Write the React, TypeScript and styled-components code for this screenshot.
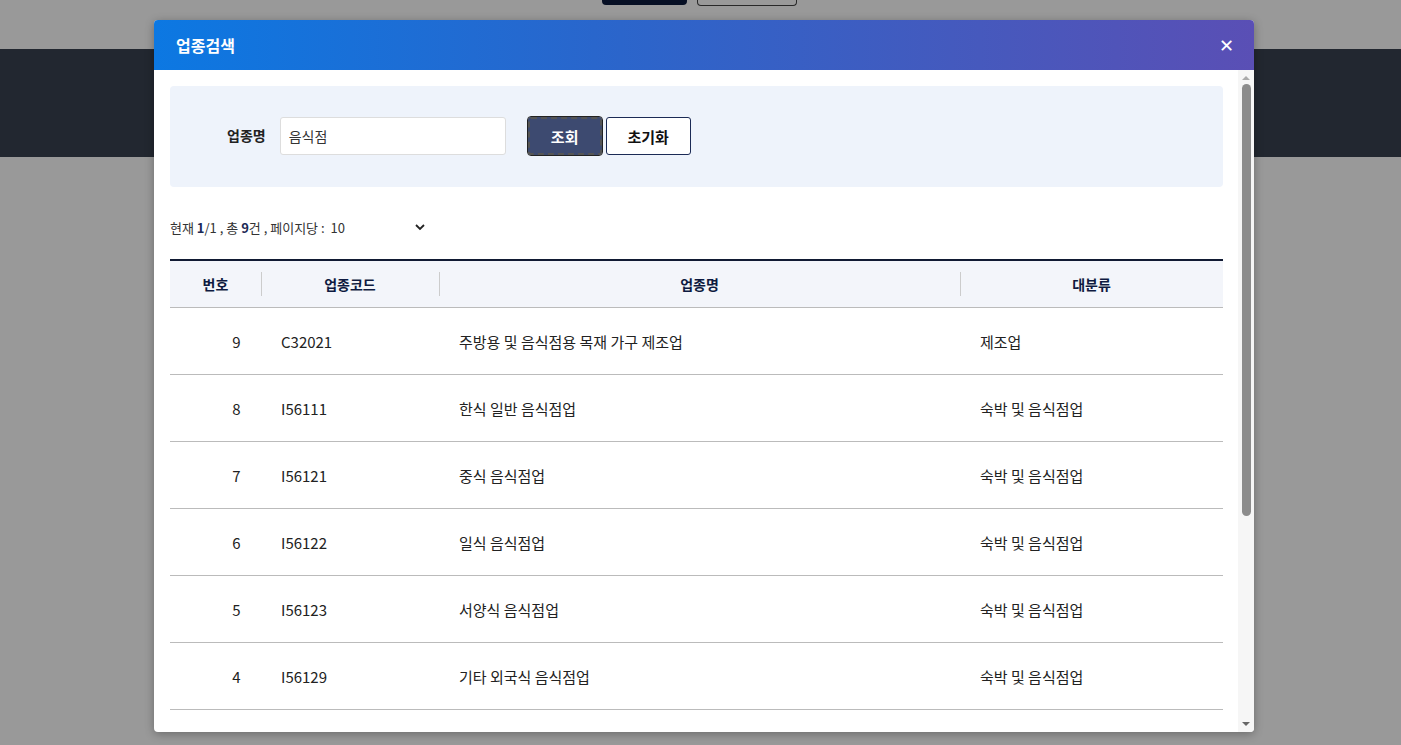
import React from "react";
import styled, { createGlobalStyle } from "styled-components";

const G = createGlobalStyle`
  html,body{margin:0;padding:0;height:100%;overflow:hidden;}
  body{font-family:"Noto Sans CJK KR","Noto Sans",sans-serif;background:#fff;}
`;
const Page = styled.div`position:relative;width:1401px;height:745px;background:#fff;overflow:hidden;`;
const TopBar = styled.div`height:49px;display:flex;justify-content:center;gap:10px;padding-right:3px;`;
const TopBtn = styled.div<{dark?:boolean}>`width:${p=>p.dark?85:98}px;height:5px;border-radius:0 0 4px 4px;
  background:${p=>p.dark?"#0b1a3c":"#fff"};border:${p=>p.dark?"none":"1px solid #444"};border-top:none;`;
const Band = styled.div`height:108px;background:#3a4150;`;
const Dim = styled.div`position:absolute;inset:0;background:rgba(0,0,0,0.4);`;
const Modal = styled.div`position:absolute;left:154px;top:20px;width:1100px;height:712px;background:#fff;border-radius:4px;
  overflow:hidden;display:flex;flex-direction:column;box-shadow:0 2px 10px rgba(0,0,0,.3);`;
const Header = styled.div`height:50px;flex:none;display:flex;align-items:center;justify-content:space-between;padding:0 20px 0 22px;
  background:linear-gradient(90deg,#0c78e2 0%,#2966cc 40%,#4659bd 75%,#5a4fb5 100%);color:#fff;font-weight:700;font-size:16px;`;
const Close = styled.span`font-size:18px;font-weight:700;font-family:"DejaVu Sans",sans-serif;`;
const BodyWrap = styled.div`flex:1;display:flex;min-height:0;`;
const Body = styled.div`flex:1;overflow:hidden;padding:16px 15px 0 16px;`;
const Track = styled.div`width:16px;flex:none;background:#f6f6f6;display:flex;flex-direction:column;align-items:center;`;
const Arrow = styled.div<{down?:boolean}>`width:0;height:0;border-left:4px solid transparent;border-right:4px solid transparent;margin:${p=>p.down?"auto 0 6px":"6px 0 4px"};
  ${p=>p.down?"border-top:4px solid #666;":"border-bottom:4px solid #aaa;"}`;
const Thumb = styled.div`width:9px;height:432px;background:#8c8c8c;border-radius:5px;`;
const SearchBox = styled.div`background:#eef3fb;border-radius:4px;height:101px;display:flex;align-items:flex-start;padding:31px 0 0 57px;box-sizing:border-box;`;
const Label = styled.label`font-size:14px;font-weight:700;color:#222;margin-top:8px;margin-right:14px;`;
const Input = styled.div`width:226px;height:38px;box-sizing:border-box;border:1px solid #ddd;border-radius:3px;background:#fff;
  font-size:14px;color:#333;display:flex;align-items:center;padding-left:8px;margin-right:22px;`;
const Btn = styled.button<{primary?:boolean}>`height:38px;box-sizing:border-box;font-family:inherit;font-size:15px;font-weight:700;border-radius:3px;
  ${p=>p.primary?"width:74px;background:#3d4a70;color:#fff;border:2px dashed #555;outline:1px solid #222;margin-right:4px;":"width:85px;background:#fff;color:#111;border:1px solid #1b2a55;"}`;
const Info = styled.div`margin-top:30px;height:20px;display:flex;align-items:center;font-size:13px;color:#333;`;
const B = styled.b`color:#1b2a55;`;
const Sel = styled.span`margin-left:6px;width:94px;display:flex;justify-content:space-between;align-items:center;`;
const Table = styled.table`margin-top:22px;width:100%;border-collapse:collapse;border-top:2px solid #111a33;font-size:15px;color:#222;`;
const Th = styled.th<{w?:number}>`height:46px;background:#f3f5fa;font-weight:700;font-size:14px;color:#0e1a40;border-bottom:1px solid #bbb;position:relative;padding:0;
  ${p=>p.w?`width:${p.w}px;`:""}
  &:not(:first-child)::before{content:"";position:absolute;left:0;top:11px;height:24px;border-left:1px solid #ccc;}`;
const Td = styled.td<{num?:boolean}>`height:66px;border-bottom:1px solid #bbb;padding:0 0 0 ${p=>p.num?42:20}px;text-align:${p=>p.num?"center":"left"};`;
const rows=[[9,"C32021","주방용 및 음식점용 목재 가구 제조업","제조업"],[8,"I56111","한식 일반 음식점업","숙박 및 음식점업"],[7,"I56121","중식 음식점업","숙박 및 음식점업"],[6,"I56122","일식 음식점업","숙박 및 음식점업"],[5,"I56123","서양식 음식점업","숙박 및 음식점업"],[4,"I56129","기타 외국식 음식점업","숙박 및 음식점업"],[3,"I56191","제과점업","숙박 및 음식점업"],[2,"I56192","피자, 햄버거 및 치킨 전문점","숙박 및 음식점업"],[1,"I56199","그 외 기타 간이 음식점업","숙박 및 음식점업"]];
export default function App(){return(<Page><G/><TopBar><TopBtn dark/><TopBtn/></TopBar><Band/><Dim/>
<Modal><Header>업종검색<Close>✕</Close></Header><BodyWrap><Body>
<SearchBox><Label>업종명</Label><Input>음식점</Input><Btn primary>조회</Btn><Btn>초기화</Btn></SearchBox>
<Info>현재&nbsp;<B>1</B>/1 , 총&nbsp;<B>9</B>건 , 페이지당 :<Sel>10<svg width="10" height="8" viewBox="0 0 10 8"><path d="M1 2l4 4 4-4" stroke="#222" strokeWidth="1.8" fill="none"/></svg></Sel></Info>
<Table><thead><tr><Th w={91}>번호</Th><Th w={178}>업종코드</Th><Th w={521}>업종명</Th><Th>대분류</Th></tr></thead>
<tbody>{rows.map(r=><tr key={r[0]}><Td num>{r[0]}</Td><Td>{r[1]}</Td><Td>{r[2]}</Td><Td>{r[3]}</Td></tr>)}</tbody></Table>
</Body><Track><Arrow/><Thumb/><Arrow down/></Track></BodyWrap></Modal></Page>);}
